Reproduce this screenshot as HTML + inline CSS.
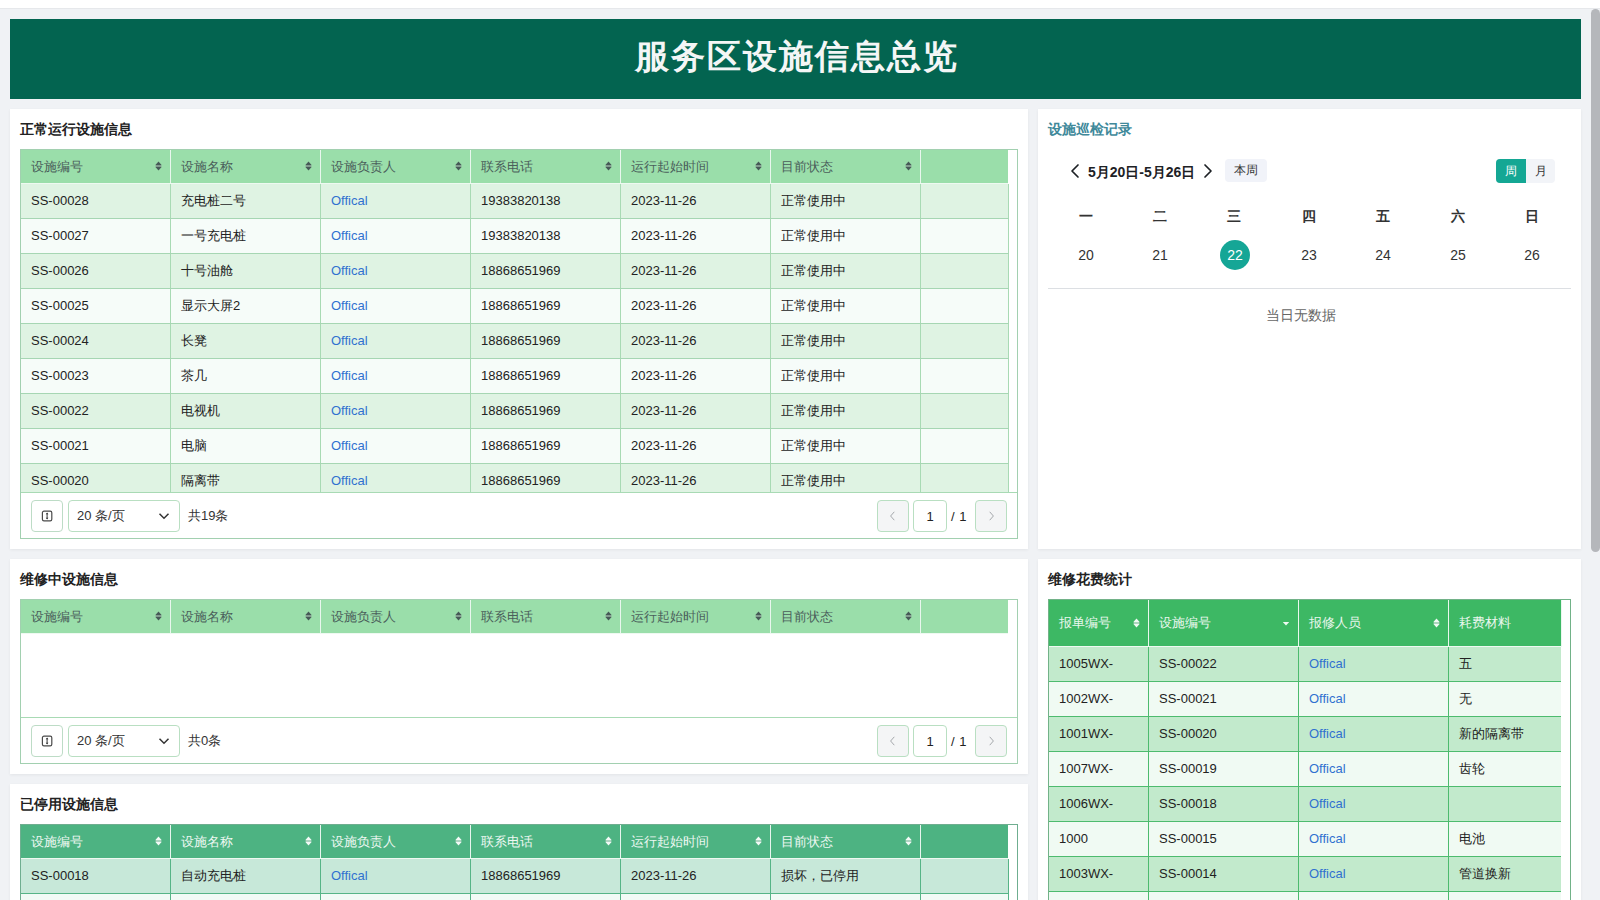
<!DOCTYPE html>
<html><head><meta charset="utf-8"><title>服务区设施信息总览</title><style>
*{box-sizing:border-box;margin:0;padding:0}
html,body{width:1600px;height:900px;overflow:hidden}
body{position:relative;background:#f0f2f5;font-family:"Liberation Sans",sans-serif;color:#222;font-size:13px}
.topbar{position:absolute;left:0;top:0;width:1600px;height:9px;background:#fff;border-bottom:1px solid #e6e8eb}
.scroll{position:absolute;left:1591px;top:9px;width:9px;height:543px;background:#b5b7bb;border-radius:5px}
.hdr{position:absolute;left:10px;top:19px;width:1571px;height:80px;background:#036450;color:#f4f6f6;font-size:34px;font-weight:bold;text-align:center;line-height:74px;letter-spacing:2px;text-indent:2px}
.card{position:absolute;background:#fff;box-shadow:0 1px 3px rgba(0,0,0,0.06)}
.ctitle{position:absolute;left:10px;top:10px;font-size:14px;font-weight:bold;color:#222;line-height:20px}
.tw{position:absolute;left:10px;top:40px;width:998px;border:1px solid #a2d0b0;overflow:hidden}
.thead{position:absolute;left:0;top:0;height:34px;width:987px;border-bottom:1px solid #eef9f1}
.th{position:absolute;top:0;height:33px;line-height:33px;padding-left:10px;color:#4a5f5b;font-size:13px;border-right:1px solid #e9f7ee}
.th.last{border-right:none}
.th .si{position:absolute;right:8px;top:11px;fill:#465a57}
.th .si .band{fill:#7d8b89}
.t5 .th .si .band,.t4 .th .si .band{fill:#c9dcd2}
.tbody{position:absolute;left:0;top:34px;width:988px;overflow:hidden}
.tr{position:absolute;left:0;height:35px;width:988px;border-bottom:1px solid #a6d6b3}
.td{position:absolute;top:0;height:34px;line-height:34px;padding-left:10px;border-right:1px solid #a8dab4;color:#222;white-space:nowrap}
.link{color:#3071d0}
.t1 .thead{background:#9adeaa}
.t1 .odd{background:#dff3e3}
.t1 .even{background:#f6fcf9}
.tfoot{position:absolute;left:0;bottom:0;width:996px;height:46px;border-top:1px solid #a8dab4;background:#fff}
.fbtn{position:absolute;left:10px;top:7px;width:32px;height:32px;border:1px solid #bddcc6;border-radius:4px;display:flex;align-items:center;justify-content:center}
.fsel{position:absolute;left:47px;top:7px;width:112px;height:32px;border:1px solid #b9dfc2;border-radius:4px;padding-left:8px;line-height:30px;color:#333}
.fsel svg{position:absolute;right:8px;top:8px}
.ftotal{position:absolute;left:167px;top:7px;line-height:32px;color:#333}
.pbtn{position:absolute;top:7px;width:32px;height:32px;border:1px solid #b9dfc2;border-radius:4px;background:#f4f5f6;display:flex;align-items:center;justify-content:center}
.prev{left:856px}.next{left:954px}
.pinput{position:absolute;left:892px;top:7px;width:34px;height:32px;border:1px solid #b9dfc2;border-radius:4px;text-align:center;line-height:31px;color:#222}
.pof{position:absolute;left:930px;top:7px;line-height:33px;color:#222;word-spacing:1px}
.t3 .thead{background:#9adeaa}
.t5{border-color:#6fae90}
.t5 .thead{background:#4db382}
.t5 .th{color:#eef8f2;border-right-color:#e8f5ee}
.t5 .th .si{fill:#f2faf6}
.t5 .tr{border-bottom-color:#56b487}
.t5 .td{border-right-color:#56b487}
.t5 .odd{background:#c7e8d9}
.t5 .even{background:#f2faf6}
.t4{left:10px;top:40px;width:523px;border-color:#72b288}
.t4 .thead{height:47px;width:513px;background:#3db864}
.t4 .th{height:46px;line-height:46px;color:#eaf7ee;padding-left:10px;border-right-color:#eaf7ee}
.t4 .th .si{top:18px;right:8px;fill:#f0faf3}
.t4 .tbody{top:47px;width:514px;height:300px}
.t4 .tr{width:512px;border-bottom-color:#4dbb6e}
.t4 .td{padding-left:10px;border-right-color:#4dbb6e}
.t4 .odd{background:#c2eacc}
.t4 .even{background:#f0faf3}
.cal-title{position:absolute;left:10px;top:10px;font-size:14px;font-weight:bold;color:#40899a;line-height:20px}
.wk{position:absolute;top:99px;width:40px;text-align:center;font-size:14px;font-weight:bold;color:#333;margin-left:-20px}
.dn{position:absolute;top:131px;width:30px;height:30px;line-height:30px;text-align:center;font-size:14px;color:#333;margin-left:-15px;border-radius:50%}
.z{font-size:calc(100% - 0.5px);position:relative;top:-0.25px}
.hdr .z{font-size:inherit;letter-spacing:inherit;top:0;left:0}
.dn.sel{background:#15a696;color:#fff;margin-left:-14px}
</style></head>
<body>
<div class="topbar"></div>
<div class="scroll"></div>
<div class="hdr">服务区设施信息总览</div>

<div class="card" style="left:10px;top:109px;width:1018px;height:440px">
<div class="ctitle">正常运行设施信息</div>
<div class="tw t1" style="height:390px">
<div class="thead">
<div class="th" style="left:0px;width:150px"><span>设施编号</span><svg class="si" width="7" height="10" viewBox="0 0 7 10"><path d="M3.5 0.6L6.6 4H0.4Z M3.5 9.4L6.6 6H0.4Z"/><path class="band" d="M0.6 4.2H6.4V5.8H0.6Z"/></svg></div>
<div class="th" style="left:150px;width:150px"><span>设施名称</span><svg class="si" width="7" height="10" viewBox="0 0 7 10"><path d="M3.5 0.6L6.6 4H0.4Z M3.5 9.4L6.6 6H0.4Z"/><path class="band" d="M0.6 4.2H6.4V5.8H0.6Z"/></svg></div>
<div class="th" style="left:300px;width:150px"><span>设施负责人</span><svg class="si" width="7" height="10" viewBox="0 0 7 10"><path d="M3.5 0.6L6.6 4H0.4Z M3.5 9.4L6.6 6H0.4Z"/><path class="band" d="M0.6 4.2H6.4V5.8H0.6Z"/></svg></div>
<div class="th" style="left:450px;width:150px"><span>联系电话</span><svg class="si" width="7" height="10" viewBox="0 0 7 10"><path d="M3.5 0.6L6.6 4H0.4Z M3.5 9.4L6.6 6H0.4Z"/><path class="band" d="M0.6 4.2H6.4V5.8H0.6Z"/></svg></div>
<div class="th" style="left:600px;width:150px"><span>运行起始时间</span><svg class="si" width="7" height="10" viewBox="0 0 7 10"><path d="M3.5 0.6L6.6 4H0.4Z M3.5 9.4L6.6 6H0.4Z"/><path class="band" d="M0.6 4.2H6.4V5.8H0.6Z"/></svg></div>
<div class="th" style="left:750px;width:150px"><span>目前状态</span><svg class="si" width="7" height="10" viewBox="0 0 7 10"><path d="M3.5 0.6L6.6 4H0.4Z M3.5 9.4L6.6 6H0.4Z"/><path class="band" d="M0.6 4.2H6.4V5.8H0.6Z"/></svg></div>
<div class="th last" style="left:900px;width:87px"></div>
</div>
<div class="tbody" style="height:308px">
<div class="tr odd" style="top:0px">
<div class="td" style="left:0px;width:150px">SS-00028</div>
<div class="td" style="left:150px;width:150px">充电桩二号</div>
<div class="td link" style="left:300px;width:150px">Offical</div>
<div class="td" style="left:450px;width:150px">19383820138</div>
<div class="td" style="left:600px;width:150px">2023-11-26</div>
<div class="td" style="left:750px;width:150px">正常使用中</div>
<div class="td" style="left:900px;width:88px"></div>
</div>
<div class="tr even" style="top:35px">
<div class="td" style="left:0px;width:150px">SS-00027</div>
<div class="td" style="left:150px;width:150px">一号充电桩</div>
<div class="td link" style="left:300px;width:150px">Offical</div>
<div class="td" style="left:450px;width:150px">19383820138</div>
<div class="td" style="left:600px;width:150px">2023-11-26</div>
<div class="td" style="left:750px;width:150px">正常使用中</div>
<div class="td" style="left:900px;width:88px"></div>
</div>
<div class="tr odd" style="top:70px">
<div class="td" style="left:0px;width:150px">SS-00026</div>
<div class="td" style="left:150px;width:150px">十号油舱</div>
<div class="td link" style="left:300px;width:150px">Offical</div>
<div class="td" style="left:450px;width:150px">18868651969</div>
<div class="td" style="left:600px;width:150px">2023-11-26</div>
<div class="td" style="left:750px;width:150px">正常使用中</div>
<div class="td" style="left:900px;width:88px"></div>
</div>
<div class="tr even" style="top:105px">
<div class="td" style="left:0px;width:150px">SS-00025</div>
<div class="td" style="left:150px;width:150px">显示大屏2</div>
<div class="td link" style="left:300px;width:150px">Offical</div>
<div class="td" style="left:450px;width:150px">18868651969</div>
<div class="td" style="left:600px;width:150px">2023-11-26</div>
<div class="td" style="left:750px;width:150px">正常使用中</div>
<div class="td" style="left:900px;width:88px"></div>
</div>
<div class="tr odd" style="top:140px">
<div class="td" style="left:0px;width:150px">SS-00024</div>
<div class="td" style="left:150px;width:150px">长凳</div>
<div class="td link" style="left:300px;width:150px">Offical</div>
<div class="td" style="left:450px;width:150px">18868651969</div>
<div class="td" style="left:600px;width:150px">2023-11-26</div>
<div class="td" style="left:750px;width:150px">正常使用中</div>
<div class="td" style="left:900px;width:88px"></div>
</div>
<div class="tr even" style="top:175px">
<div class="td" style="left:0px;width:150px">SS-00023</div>
<div class="td" style="left:150px;width:150px">茶几</div>
<div class="td link" style="left:300px;width:150px">Offical</div>
<div class="td" style="left:450px;width:150px">18868651969</div>
<div class="td" style="left:600px;width:150px">2023-11-26</div>
<div class="td" style="left:750px;width:150px">正常使用中</div>
<div class="td" style="left:900px;width:88px"></div>
</div>
<div class="tr odd" style="top:210px">
<div class="td" style="left:0px;width:150px">SS-00022</div>
<div class="td" style="left:150px;width:150px">电视机</div>
<div class="td link" style="left:300px;width:150px">Offical</div>
<div class="td" style="left:450px;width:150px">18868651969</div>
<div class="td" style="left:600px;width:150px">2023-11-26</div>
<div class="td" style="left:750px;width:150px">正常使用中</div>
<div class="td" style="left:900px;width:88px"></div>
</div>
<div class="tr even" style="top:245px">
<div class="td" style="left:0px;width:150px">SS-00021</div>
<div class="td" style="left:150px;width:150px">电脑</div>
<div class="td link" style="left:300px;width:150px">Offical</div>
<div class="td" style="left:450px;width:150px">18868651969</div>
<div class="td" style="left:600px;width:150px">2023-11-26</div>
<div class="td" style="left:750px;width:150px">正常使用中</div>
<div class="td" style="left:900px;width:88px"></div>
</div>
<div class="tr odd" style="top:280px">
<div class="td" style="left:0px;width:150px">SS-00020</div>
<div class="td" style="left:150px;width:150px">隔离带</div>
<div class="td link" style="left:300px;width:150px">Offical</div>
<div class="td" style="left:450px;width:150px">18868651969</div>
<div class="td" style="left:600px;width:150px">2023-11-26</div>
<div class="td" style="left:750px;width:150px">正常使用中</div>
<div class="td" style="left:900px;width:88px"></div>
</div>
</div>
<div class="tfoot">
<div class="fbtn"><svg width="12" height="12" viewBox="0 0 12 12"><rect x="1.4" y="1.2" width="9.4" height="9.6" rx="1.6" fill="none" stroke="#4a4a4a" stroke-width="1.2"/><path d="M6.1 3.2V8.8" stroke="#4a4a4a" stroke-width="1.1"/><path d="M6.1 2.6L7.4 4.2H4.8Z M6.1 9.4L7.4 7.8H4.8Z" fill="#333"/></svg></div>
<div class="fsel"><span>20 条/页</span><svg width="14" height="14" viewBox="0 0 14 14"><path d="M2.5 4.8L7 9.3L11.5 4.8" fill="none" stroke="#333" stroke-width="1.5"/></svg></div>
<div class="ftotal">共19条</div>
<div class="pbtn prev"><svg width="10" height="10" viewBox="0 0 10 10"><path d="M6.3 0.8L2.6 5L6.3 9.2" fill="none" stroke="#a4a7ab" stroke-width="1"/></svg></div>
<div class="pinput">1</div>
<div class="pof">/ 1</div>
<div class="pbtn next"><svg width="10" height="10" viewBox="0 0 10 10"><path d="M3.7 0.8L7.4 5L3.7 9.2" fill="none" stroke="#a4a7ab" stroke-width="1"/></svg></div>
</div>
</div>
</div>

<div class="card" style="left:1038px;top:109px;width:543px;height:440px">
<div class="cal-title">设施巡检记录</div>
<svg style="position:absolute;left:31px;top:54px" width="12" height="16" viewBox="0 0 12 16"><path d="M9 2L3 8L9 14" fill="none" stroke="#1d2125" stroke-width="1.7" stroke-linecap="round" stroke-linejoin="round"/></svg>
<div style="position:absolute;left:50px;top:53px;font-size:14px;font-weight:bold;color:#1d2125;line-height:20px">5月20日-5月26日</div>
<svg style="position:absolute;left:164px;top:54px" width="12" height="16" viewBox="0 0 12 16"><path d="M3 2L9 8L3 14" fill="none" stroke="#1d2125" stroke-width="1.7" stroke-linecap="round" stroke-linejoin="round"/></svg>
<div style="position:absolute;left:187px;top:50px;width:42px;height:23px;background:#f1f3f9;border-radius:4px;font-size:12px;text-align:center;line-height:23px;color:#333">本周</div>
<div style="position:absolute;left:458px;top:50px;width:59px;height:24px;background:#f2f4f8;border-radius:4px"></div>
<div style="position:absolute;left:458px;top:50px;width:30px;height:24px;background:#14a794;border-radius:4px 0 0 4px;color:#fff;font-size:12px;text-align:center;line-height:24px">周</div>
<div style="position:absolute;left:488px;top:50px;width:29px;height:24px;color:#333;font-size:12px;text-align:center;line-height:24px">月</div>
<div class="wk" style="left:48px">一</div><div class="dn" style="left:48px">20</div><div class="wk" style="left:122px">二</div><div class="dn" style="left:122px">21</div><div class="wk" style="left:196px">三</div><div class="dn sel" style="left:196px">22</div><div class="wk" style="left:271px">四</div><div class="dn" style="left:271px">23</div><div class="wk" style="left:345px">五</div><div class="dn" style="left:345px">24</div><div class="wk" style="left:420px">六</div><div class="dn" style="left:420px">25</div><div class="wk" style="left:494px">日</div><div class="dn" style="left:494px">26</div>
<div style="position:absolute;left:10px;top:179px;width:523px;height:1px;background:#dcdfe3"></div>
<div style="position:absolute;left:0;top:196px;width:526px;text-align:center;font-size:14px;color:#666;line-height:20px">当日无数据</div>
</div>

<div class="card" style="left:10px;top:559px;width:1018px;height:215px">
<div class="ctitle">维修中设施信息</div>
<div class="tw t3" style="height:165px">
<div class="thead">
<div class="th" style="left:0px;width:150px"><span>设施编号</span><svg class="si" width="7" height="10" viewBox="0 0 7 10"><path d="M3.5 0.6L6.6 4H0.4Z M3.5 9.4L6.6 6H0.4Z"/><path class="band" d="M0.6 4.2H6.4V5.8H0.6Z"/></svg></div>
<div class="th" style="left:150px;width:150px"><span>设施名称</span><svg class="si" width="7" height="10" viewBox="0 0 7 10"><path d="M3.5 0.6L6.6 4H0.4Z M3.5 9.4L6.6 6H0.4Z"/><path class="band" d="M0.6 4.2H6.4V5.8H0.6Z"/></svg></div>
<div class="th" style="left:300px;width:150px"><span>设施负责人</span><svg class="si" width="7" height="10" viewBox="0 0 7 10"><path d="M3.5 0.6L6.6 4H0.4Z M3.5 9.4L6.6 6H0.4Z"/><path class="band" d="M0.6 4.2H6.4V5.8H0.6Z"/></svg></div>
<div class="th" style="left:450px;width:150px"><span>联系电话</span><svg class="si" width="7" height="10" viewBox="0 0 7 10"><path d="M3.5 0.6L6.6 4H0.4Z M3.5 9.4L6.6 6H0.4Z"/><path class="band" d="M0.6 4.2H6.4V5.8H0.6Z"/></svg></div>
<div class="th" style="left:600px;width:150px"><span>运行起始时间</span><svg class="si" width="7" height="10" viewBox="0 0 7 10"><path d="M3.5 0.6L6.6 4H0.4Z M3.5 9.4L6.6 6H0.4Z"/><path class="band" d="M0.6 4.2H6.4V5.8H0.6Z"/></svg></div>
<div class="th" style="left:750px;width:150px"><span>目前状态</span><svg class="si" width="7" height="10" viewBox="0 0 7 10"><path d="M3.5 0.6L6.6 4H0.4Z M3.5 9.4L6.6 6H0.4Z"/><path class="band" d="M0.6 4.2H6.4V5.8H0.6Z"/></svg></div>
<div class="th last" style="left:900px;width:87px"></div>
</div>
<div class="tbody" style="height:83px">
</div>
<div class="tfoot">
<div class="fbtn"><svg width="12" height="12" viewBox="0 0 12 12"><rect x="1.4" y="1.2" width="9.4" height="9.6" rx="1.6" fill="none" stroke="#4a4a4a" stroke-width="1.2"/><path d="M6.1 3.2V8.8" stroke="#4a4a4a" stroke-width="1.1"/><path d="M6.1 2.6L7.4 4.2H4.8Z M6.1 9.4L7.4 7.8H4.8Z" fill="#333"/></svg></div>
<div class="fsel"><span>20 条/页</span><svg width="14" height="14" viewBox="0 0 14 14"><path d="M2.5 4.8L7 9.3L11.5 4.8" fill="none" stroke="#333" stroke-width="1.5"/></svg></div>
<div class="ftotal">共0条</div>
<div class="pbtn prev"><svg width="10" height="10" viewBox="0 0 10 10"><path d="M6.3 0.8L2.6 5L6.3 9.2" fill="none" stroke="#a4a7ab" stroke-width="1"/></svg></div>
<div class="pinput">1</div>
<div class="pof">/ 1</div>
<div class="pbtn next"><svg width="10" height="10" viewBox="0 0 10 10"><path d="M3.7 0.8L7.4 5L3.7 9.2" fill="none" stroke="#a4a7ab" stroke-width="1"/></svg></div>
</div>
</div>
</div>

<div class="card" style="left:10px;top:784px;width:1018px;height:200px">
<div class="ctitle">已停用设施信息</div>
<div class="tw t5" style="height:136px">
<div class="thead">
<div class="th" style="left:0px;width:150px"><span>设施编号</span><svg class="si" width="7" height="10" viewBox="0 0 7 10"><path d="M3.5 0.6L6.6 4H0.4Z M3.5 9.4L6.6 6H0.4Z"/><path class="band" d="M0.6 4.2H6.4V5.8H0.6Z"/></svg></div>
<div class="th" style="left:150px;width:150px"><span>设施名称</span><svg class="si" width="7" height="10" viewBox="0 0 7 10"><path d="M3.5 0.6L6.6 4H0.4Z M3.5 9.4L6.6 6H0.4Z"/><path class="band" d="M0.6 4.2H6.4V5.8H0.6Z"/></svg></div>
<div class="th" style="left:300px;width:150px"><span>设施负责人</span><svg class="si" width="7" height="10" viewBox="0 0 7 10"><path d="M3.5 0.6L6.6 4H0.4Z M3.5 9.4L6.6 6H0.4Z"/><path class="band" d="M0.6 4.2H6.4V5.8H0.6Z"/></svg></div>
<div class="th" style="left:450px;width:150px"><span>联系电话</span><svg class="si" width="7" height="10" viewBox="0 0 7 10"><path d="M3.5 0.6L6.6 4H0.4Z M3.5 9.4L6.6 6H0.4Z"/><path class="band" d="M0.6 4.2H6.4V5.8H0.6Z"/></svg></div>
<div class="th" style="left:600px;width:150px"><span>运行起始时间</span><svg class="si" width="7" height="10" viewBox="0 0 7 10"><path d="M3.5 0.6L6.6 4H0.4Z M3.5 9.4L6.6 6H0.4Z"/><path class="band" d="M0.6 4.2H6.4V5.8H0.6Z"/></svg></div>
<div class="th" style="left:750px;width:150px"><span>目前状态</span><svg class="si" width="7" height="10" viewBox="0 0 7 10"><path d="M3.5 0.6L6.6 4H0.4Z M3.5 9.4L6.6 6H0.4Z"/><path class="band" d="M0.6 4.2H6.4V5.8H0.6Z"/></svg></div>
<div class="th last" style="left:900px;width:87px"></div>
</div>
<div class="tbody" style="height:100px">
<div class="tr odd" style="top:0px">
<div class="td" style="left:0px;width:150px">SS-00018</div>
<div class="td" style="left:150px;width:150px">自动充电桩</div>
<div class="td link" style="left:300px;width:150px">Offical</div>
<div class="td" style="left:450px;width:150px">18868651969</div>
<div class="td" style="left:600px;width:150px">2023-11-26</div>
<div class="td" style="left:750px;width:150px">损坏，已停用</div>
<div class="td" style="left:900px;width:88px"></div>
</div>
<div class="tr even" style="top:35px">
<div class="td" style="left:0px;width:150px">SS-00017</div>
<div class="td" style="left:150px;width:150px">充电桩</div>
<div class="td link" style="left:300px;width:150px">Offical</div>
<div class="td" style="left:450px;width:150px">18868651969</div>
<div class="td" style="left:600px;width:150px">2023-11-26</div>
<div class="td" style="left:750px;width:150px">损坏，已停用</div>
<div class="td" style="left:900px;width:88px"></div>
</div>
</div>
</div>
</div>

<div class="card" style="left:1038px;top:559px;width:543px;height:400px">
<div class="ctitle">维修花费统计</div>
<div class="tw t4" style="height:400px">
<div class="thead">
<div class="th" style="left:0px;width:100px"><span>报单编号</span><svg class="si" width="7" height="10" viewBox="0 0 7 10"><path d="M3.5 0.6L6.6 4H0.4Z M3.5 9.4L6.6 6H0.4Z"/><path class="band" d="M0.6 4.2H6.4V5.8H0.6Z"/></svg></div>
<div class="th" style="left:100px;width:150px"><span>设施编号</span><svg class="si" width="8" height="10" viewBox="0 0 8 10"><path d="M4 7.5L7.2 4H0.8Z"/></svg></div>
<div class="th" style="left:250px;width:150px"><span>报修人员</span><svg class="si" width="7" height="10" viewBox="0 0 7 10"><path d="M3.5 0.6L6.6 4H0.4Z M3.5 9.4L6.6 6H0.4Z"/><path class="band" d="M0.6 4.2H6.4V5.8H0.6Z"/></svg></div>
<div class="th" style="left:400px;width:113px"><span>耗费材料</span></div>
</div><div class="tbody">
<div class="tr odd" style="top:0px">
<div class="td" style="left:0px;width:100px">1005WX-</div>
<div class="td" style="left:100px;width:150px">SS-00022</div>
<div class="td link" style="left:250px;width:150px">Offical</div>
<div class="td" style="left:400px;width:113px;border-right:none">五</div>
</div>
<div class="tr even" style="top:35px">
<div class="td" style="left:0px;width:100px">1002WX-</div>
<div class="td" style="left:100px;width:150px">SS-00021</div>
<div class="td link" style="left:250px;width:150px">Offical</div>
<div class="td" style="left:400px;width:113px;border-right:none">无</div>
</div>
<div class="tr odd" style="top:70px">
<div class="td" style="left:0px;width:100px">1001WX-</div>
<div class="td" style="left:100px;width:150px">SS-00020</div>
<div class="td link" style="left:250px;width:150px">Offical</div>
<div class="td" style="left:400px;width:113px;border-right:none">新的隔离带</div>
</div>
<div class="tr even" style="top:105px">
<div class="td" style="left:0px;width:100px">1007WX-</div>
<div class="td" style="left:100px;width:150px">SS-00019</div>
<div class="td link" style="left:250px;width:150px">Offical</div>
<div class="td" style="left:400px;width:113px;border-right:none">齿轮</div>
</div>
<div class="tr odd" style="top:140px">
<div class="td" style="left:0px;width:100px">1006WX-</div>
<div class="td" style="left:100px;width:150px">SS-00018</div>
<div class="td link" style="left:250px;width:150px">Offical</div>
<div class="td" style="left:400px;width:113px;border-right:none"></div>
</div>
<div class="tr even" style="top:175px">
<div class="td" style="left:0px;width:100px">1000</div>
<div class="td" style="left:100px;width:150px">SS-00015</div>
<div class="td link" style="left:250px;width:150px">Offical</div>
<div class="td" style="left:400px;width:113px;border-right:none">电池</div>
</div>
<div class="tr odd" style="top:210px">
<div class="td" style="left:0px;width:100px">1003WX-</div>
<div class="td" style="left:100px;width:150px">SS-00014</div>
<div class="td link" style="left:250px;width:150px">Offical</div>
<div class="td" style="left:400px;width:113px;border-right:none">管道换新</div>
</div>
<div class="tr even" style="top:245px">
<div class="td" style="left:0px;width:100px">1004WX-</div>
<div class="td" style="left:100px;width:150px">SS-00013</div>
<div class="td link" style="left:250px;width:150px">Offical</div>
<div class="td" style="left:400px;width:113px;border-right:none">管道</div>
</div>
</div></div>
</div>
</body></html>
